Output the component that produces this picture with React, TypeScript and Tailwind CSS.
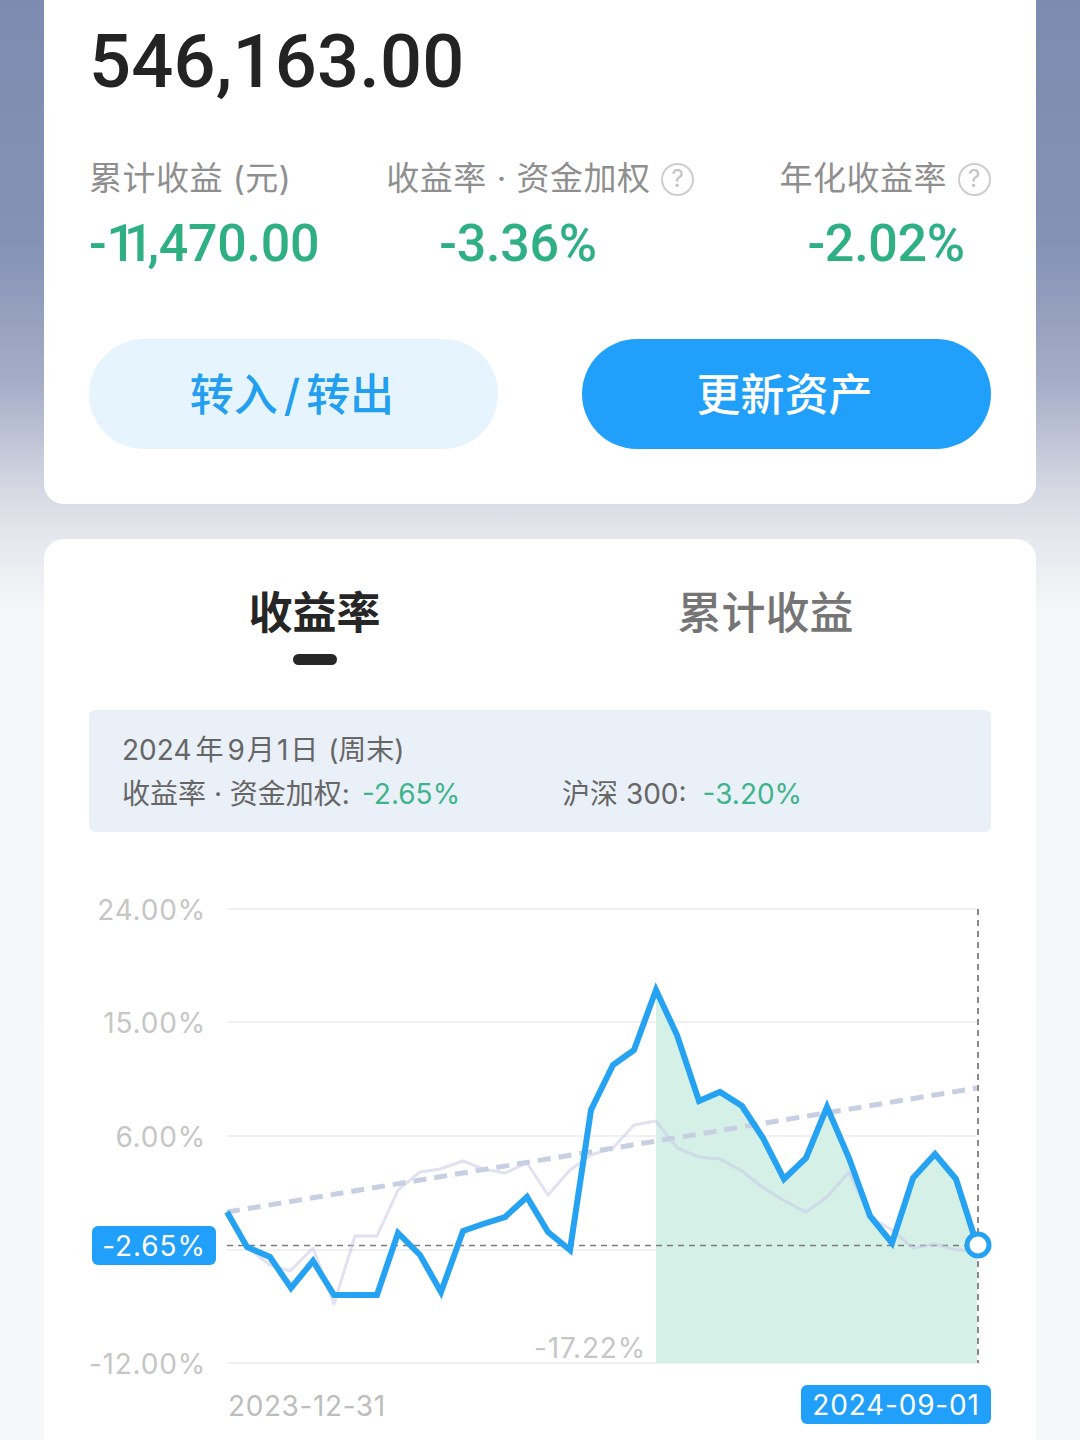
import React from 'react';

const sans = 'font-["Inter","Noto_Sans_CJK_SC",sans-serif]';
const num = 'font-["Roboto","Noto_Sans_CJK_SC",sans-serif]';

const returnLine: [number, number][] = [
  [227, 1212], [247, 1247], [270, 1257], [291, 1288], [313, 1261], [334, 1295], [377, 1295],
  [398, 1233], [420, 1255], [441, 1292], [463, 1231], [483, 1224], [505, 1217], [527, 1197],
  [548, 1232], [570, 1250], [591, 1110], [613, 1065], [634, 1050], [656, 990], [677, 1035],
  [699, 1101], [720, 1092], [742, 1106], [763, 1138], [784, 1179], [806, 1158], [827, 1107],
  [849, 1158], [870, 1216], [892, 1243], [913, 1178], [935, 1154], [956, 1179], [977, 1245],
];

const benchLine: [number, number][] = [
  [227, 1212], [247, 1247], [270, 1265], [290, 1271], [313, 1248], [334, 1304], [355, 1236],
  [377, 1236], [398, 1190], [420, 1172], [440, 1169], [463, 1161], [483, 1169], [505, 1173],
  [527, 1163], [548, 1195], [570, 1170], [591, 1155], [613, 1148], [634, 1125], [656, 1121],
  [677, 1148], [699, 1157], [720, 1159], [742, 1171], [762, 1187], [783, 1200], [806, 1212],
  [827, 1197], [849, 1172], [870, 1217], [892, 1230], [913, 1248], [935, 1244], [956, 1250],
  [977, 1250],
];

const toPoints = (pts: [number, number][]) => pts.map(p => p.join(',')).join(' ');

const drawdown = returnLine.filter(p => p[0] >= 656);
const areaPoints = toPoints([[656, 1363], ...drawdown, [977, 1363]]);

const grid = [
  { y: 909, label: '24.00%' },
  { y: 1022, label: '15.00%' },
  { y: 1136, label: '6.00%' },
  { y: 1250, label: '' },
  { y: 1363, label: '-12.00%' },
];

const Help = () => (
  <span className="ml-[11px] w-[33px] h-[33px] rounded-full border-2 border-[#cdcdcd] text-[#c4c4c4] text-[24px] leading-none flex items-center justify-center">
    ?
  </span>
);

const Metric = ({ label, value, help, className }: { label: string; value: React.ReactNode; help?: boolean; className: string }) => (
  <div className="flex flex-col">
    <div className="flex items-center h-[40px] text-[33px] text-[#8f8f8f] whitespace-nowrap tracking-[0.5px]">
      {label}
      {help && <Help />}
    </div>
    <div className={`mt-[15px] text-[52px] leading-[60px] tracking-[-0.3px] text-[#2fb083] ${num} font-medium ${className}`}>{value}</div>
  </div>
);

const Chart = () => (
  <div className="relative mt-[48px] h-[560px]">
    <svg viewBox="89 880 902 560" width="902" height="560" className="overflow-visible">
      {grid.map(g => (
        <line key={g.y} x1="227" x2="977" y1={g.y} y2={g.y} stroke="#f0f1f3" strokeWidth="2" />
      ))}
      <polygon points={areaPoints} fill="#d5f0e7" />
      <line x1="227" x2="977" y1="1245.5" y2="1245.5" stroke="#7c7c7c" strokeWidth="1.5" strokeDasharray="6 5" />
      <line x1="978" x2="978" y1="909" y2="1363" stroke="#8a8a8a" strokeWidth="2" strokeDasharray="6 5" />
      <polyline points={toPoints(benchLine)} fill="none" stroke="#c9c8e6" strokeOpacity="0.55" strokeWidth="3" strokeLinejoin="round" />
      <line x1="227" x2="977" y1="1212" y2="1088" stroke="#c9cfe2" strokeWidth="5" strokeDasharray="13 8" />
      <polyline points={toPoints(returnLine)} fill="none" stroke="#25a2f2" strokeWidth="6" strokeLinejoin="miter" />
      <circle cx="978" cy="1245" r="11" fill="#fff" stroke="#25a2f2" strokeWidth="5" />
      <g className={sans} fontSize="28" fill="#c6c6c6" letterSpacing="0.8">
        {grid.filter(g => g.label).map(g => (
          <text key={g.y} x="206" y={g.y + 11} textAnchor="end">{g.label}</text>
        ))}
        <text x="646" y="1358" textAnchor="end">-17.22%</text>
        <text x="228" y="1416" fill="#bdbdbd" letterSpacing="0.6">2023-12-31</text>
      </g>
    </svg>
    <div className="absolute left-[3px] top-[346px] w-[124px] h-[39px] rounded-[6px] bg-[#20a0fa] text-white text-[28px] tracking-[0.9px] flex items-center justify-center">
      -2.65%
    </div>
    <div className="absolute left-[712px] top-[505px] w-[190px] h-[39px] rounded-[6px] bg-[#20a0fa] text-white text-[28px] tracking-[0.8px] flex items-center justify-center">
      2024-09-01
    </div>
  </div>
);

export default function App() {
  return (
    <div className={`w-[1080px] h-[1440px] overflow-hidden px-[44px] bg-[linear-gradient(to_bottom,#7d8bb0_0px,#8592b5_240px,#a4acc7_380px,#d6d9e3_490px,#e6e8ee_540px,#f5f6f8_610px,#f6f7f9_1440px)] ${sans}`}>
      <div className="h-[504px] bg-white rounded-b-[20px] px-[45px]">
        <div className={`pt-[18px] text-[74px] leading-[87px] font-medium text-[#232323] ${num} tracking-[0.2px]`}>546,163.00</div>
        <div className="mt-[54px] flex">
          <div className="w-[298px]">
            <Metric
              label="累计收益 (元)"
              value={<>-<span className="tracking-[-12px]">1</span><span className="tracking-[-6px]">1</span>,470.00</>}
              className=""
            />
          </div>
          <div className="w-[394px]"><Metric label="收益率 · 资金加权" value="-3.36%" help className="pl-[53px]" /></div>
          <Metric label="年化收益率" value="-2.02%" help className="pl-[28px]" />
        </div>
        <div className="mt-[65px] flex justify-between">
          <button className="w-[409px] h-[110px] rounded-full bg-[#e6f4fe] text-[#239fef] text-[44px] font-medium pt-[1px] pr-[3px]">
            转入<span className="mx-[6px]">/</span>转出
          </button>
          <button className="w-[409px] h-[110px] rounded-full bg-[#20a0fa] text-white text-[44px] font-medium pt-[1px] pr-[4px]">更新资产</button>
        </div>
      </div>

      <div className="mt-[35px] h-[901px] bg-white rounded-t-[20px] px-[45px]">
        <div className="pt-[46px] grid grid-cols-2 text-[44px] leading-[56px]">
          <div className="flex flex-col items-center">
            <span className="font-bold text-[#262626]">收益率</span>
            <span className="mt-[13px] w-[44px] h-[11px] rounded-full bg-[#262626]" />
          </div>
          <div className="text-center font-medium text-[#757575]">累计收益</div>
        </div>

        <div className="mt-[45px] h-[122px] rounded-[6px] bg-[#eaf0f8] pl-[33px] pt-[18px] text-[28px] leading-[44px] text-[#666]">
          <div>2024<span className="mx-[4px]">年</span>9<span className="mx-[2px]">月</span>1<span className="mx-[2px]">日</span> (周末)</div>
          <div className="flex">
            <div className="w-[440px]">收益率 · 资金加权:<span className="ml-[12px] text-[#3db48c]">-2.65%</span></div>
            <div>沪深 300:<span className="ml-[16px] text-[#3db48c]">-3.20%</span></div>
          </div>
        </div>

        <Chart />
      </div>
    </div>
  );
}
